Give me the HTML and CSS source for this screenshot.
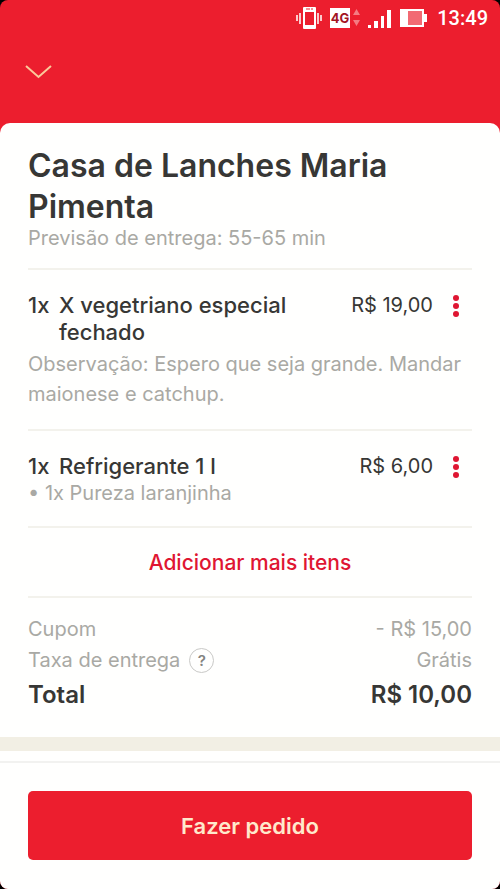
FILE: index.html
```html
<!DOCTYPE html>
<html lang="pt-BR">
<head>
<meta charset="utf-8">
<meta name="viewport" content="width=device-width, initial-scale=1">
<title>Casa de Lanches Maria Pimenta</title>
<link rel="stylesheet" href="styles.css">
</head>
<body>
<div class="screen">
  <header class="top">
    <div class="status">
      <svg class="status-icons" width="132" height="24" viewBox="0 0 132 24" aria-hidden="true">
        <path d="M2 9v6M5 7v11M23 7v11M26 9v6" fill="none" stroke="#fbc9cc" stroke-width="2"/>
        <rect x="8" y="1" width="13" height="22" rx="1" fill="#fff"/>
        <rect x="10" y="6" width="9" height="13" fill="#ec1e2e"/>
        <path d="M11 3h4M16 3h2" stroke="#ec1e2e" stroke-width="1"/>
        <rect x="35" y="2" width="20" height="20" fill="#fff"/>
        <text class="net" x="45" y="17" text-anchor="middle">4G</text>
        <path d="M58 9l3.500-6 3.500 6zM58 14h7l-3.500 6z" fill="#f47b82"/>
        <path d="M73 19h3v3h-3zM79 15h4v7h-4zM86 10h3v12h-3zM92 4h4v18h-4z" fill="#fff"/>
        <path d="M105 3h24v5h3v8h-3v5h-24z" fill="#fff"/>
        <rect x="113" y="5" width="14" height="14" fill="#f26a73"/>
      </svg>
      <time class="clock">13:49</time>
    </div>
    <button class="close" type="button" aria-label="Fechar">
      <svg width="28" height="14" viewBox="0 0 28 14" aria-hidden="true"><path d="M2 1l12.500 11L27 1" fill="none" stroke="#fbc99a" stroke-width="2"/></svg>
    </button>
  </header>

  <main class="sheet">
    <section class="store">
      <h1>Casa de Lanches Maria Pimenta</h1>
      <p class="muted">Previsão de entrega: 55-65 min</p>
    </section>

    <section class="item">
      <div class="row">
        <span class="qty">1x</span>
        <h2 class="name">X vegetriano especial fechado</h2>
        <span class="price">R$ 19,00</span>
        <button class="more" type="button" aria-label="Opções do item">
          <svg width="6" height="24" viewBox="0 0 6 24" aria-hidden="true"><circle cx="3" cy="4" r="3"/><circle cx="3" cy="12" r="3"/><circle cx="3" cy="20" r="3"/></svg>
        </button>
      </div>
      <p class="note muted">Observação: Espero que seja grande. Mandar maionese e catchup.</p>
    </section>

    <section class="item">
      <div class="row">
        <span class="qty">1x</span>
        <h2 class="name">Refrigerante 1 l</h2>
        <span class="price">R$ 6,00</span>
        <button class="more" type="button" aria-label="Opções do item">
          <svg width="6" height="24" viewBox="0 0 6 24" aria-hidden="true"><circle cx="3" cy="4" r="3"/><circle cx="3" cy="12" r="3"/><circle cx="3" cy="20" r="3"/></svg>
        </button>
      </div>
      <p class="muted">• 1x Pureza laranjinha</p>
    </section>

    <button class="add" type="button">Adicionar mais itens</button>

    <dl class="summary">
      <div class="line muted"><dt>Cupom</dt><dd>- R$ 15,00</dd></div>
      <div class="line muted"><dt>Taxa de entrega <button class="help" type="button">?</button></dt><dd>Grátis</dd></div>
      <div class="line total"><dt>Total</dt><dd>R$ 10,00</dd></div>
    </dl>
  </main>

  <footer class="bottom">
    <button class="order" type="button">Fazer pedido</button>
  </footer>
</div>
</body>
</html>
```
FILE: styles.css
```css
* {
  box-sizing: border-box;
}

body {
  margin: 0;
  background: #000;
  color: #373735;
  font-family: Inter, "Liberation Sans", sans-serif;
  font-size: 20px;
}

h1, h2, p, dl, dd {
  margin: 0;
}

button {
  padding: 0;
  border: 0;
  background: none;
  font: inherit;
  cursor: pointer;
}

svg {
  display: block;
}

.screen {
  display: flex;
  flex-direction: column;
  min-height: 100vh;
  border-radius: 8px;
  overflow: hidden;
  background: #ec1e2e;
}

.top {
  padding: 4px 12px 44px 24px;
}

.status {
  display: flex;
  justify-content: flex-end;
  align-items: center;
  gap: 10px;
  height: 28px;
}

.net {
  font: 700 13px Inter, sans-serif;
  fill: #a3141f;
}

.clock {
  color: #fff;
  font: 500 20px/24px Roboto, sans-serif;
}

.close {
  display: block;
  padding: 33px 0 0;
}

.sheet {
  flex: 1;
  padding: 22px 28px 0;
  border-radius: 10px 10px 0 0;
  background: #fffffe;
}

.muted {
  color: #a9a9a4;
  font-weight: 400;
  line-height: 30px;
}

.store {
  padding-bottom: 19px;
}

h1 {
  font-size: 32px;
  font-weight: 600;
  line-height: 41px;
}

.store .muted {
  line-height: 22px;
}

.item {
  padding: 22px 0 20px;
  border-top: 2px solid #f3f2ec;
}

.row {
  display: flex;
  align-items: flex-start;
  line-height: 27px;
}

.qty {
  width: 31px;
}

.qty, .name {
  font-size: 22px;
  font-weight: 500;
}

.name {
  flex: 1;
}

.price {
  margin-left: 16px;
}

.more {
  display: flex;
  align-items: center;
  justify-content: center;
  width: 39px;
  height: 27px;
  padding-left: 6px;
  fill: #df1632;
}

.note {
  padding-top: 3px;
}

.item + .item .muted {
  line-height: 26px;
}

.add {
  width: 100%;
  height: 72px;
  border: solid #f3f2ec;
  border-width: 2px 0;
  color: #df1632;
  font-size: 21px;
  font-weight: 500;
}

.summary {
  margin: 0 -28px;
  padding: 16px 28px 24px;
  border-bottom: 14px solid #f2efe4;
}

.line {
  display: flex;
  justify-content: space-between;
  line-height: 31px;
}

.line dt {
  display: flex;
  align-items: center;
  gap: 9px;
}

.help {
  width: 25px;
  height: 25px;
  border: 1px solid #c9c9c7;
  border-radius: 50%;
  color: #83837f;
  font-size: 15px;
  font-weight: 600;
  line-height: 23px;
}

.total {
  padding-top: 1px;
  font-size: 24px;
  font-weight: 600;
  line-height: 36px;
}

.bottom {
  background: #fffffe;
}

.order {
  display: block;
  width: calc(100% - 56px);
  height: 69px;
  margin: 28px 28px 29px;
  border-radius: 5px;
  background: #ec1e2e;
  color: #ffe9cc;
  font-size: 22px;
  font-weight: 600;
}

.bottom::before {
  content: "";
  display: block;
  border-top: 2px solid #f2f2f0;
}
```
